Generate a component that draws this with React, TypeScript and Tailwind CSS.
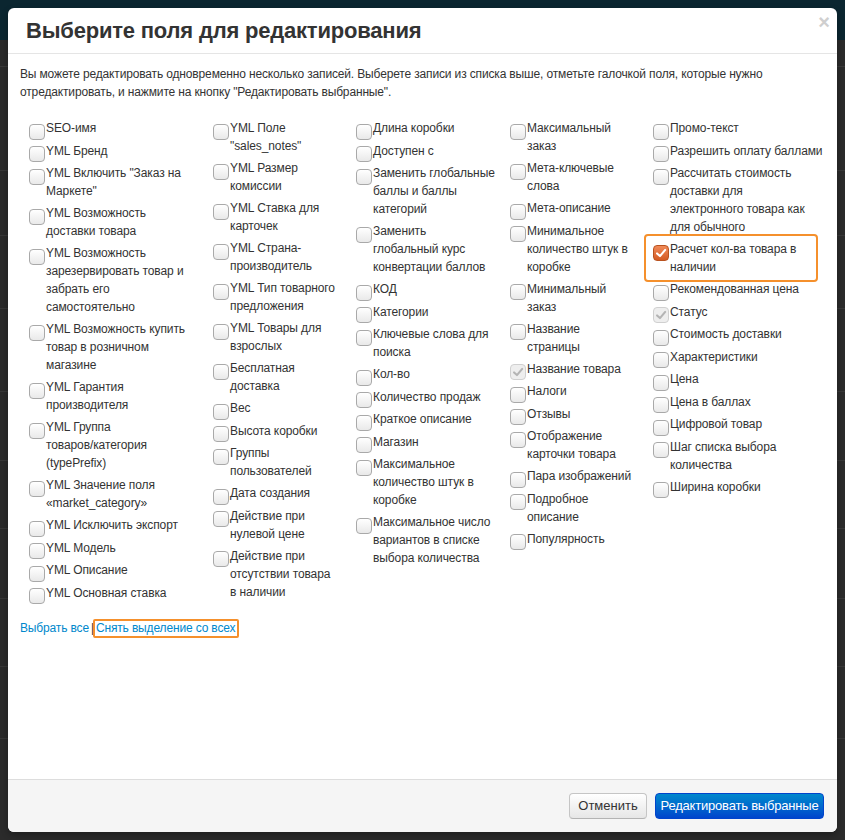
import React from "react";

type Field = {
    label: string;
    state?: "checked" | "locked";
    marked?: boolean;
};

const columns: Field[][] = [
    [
        { label: "SEO-имя" },
        { label: "YML Бренд" },
        { label: "YML Включить \"Заказ на\nМаркете\"" },
        { label: "YML Возможность\nдоставки товара" },
        { label: "YML Возможность\nзарезервировать товар и\nзабрать его\nсамостоятельно" },
        { label: "YML Возможность купить\nтовар в розничном\nмагазине" },
        { label: "YML Гарантия\nпроизводителя" },
        { label: "YML Группа\nтоваров/категория\n(typePrefix)" },
        { label: "YML Значение поля\n«market_category»" },
        { label: "YML Исключить экспорт" },
        { label: "YML Модель" },
        { label: "YML Описание" },
        { label: "YML Основная ставка" },
    ],
    [
        { label: "YML Поле\n\"sales_notes\"" },
        { label: "YML Размер\nкомиссии" },
        { label: "YML Ставка для\nкарточек" },
        { label: "YML Страна-\nпроизводитель" },
        { label: "YML Тип товарного\nпредложения" },
        { label: "YML Товары для\nвзрослых" },
        { label: "Бесплатная\nдоставка" },
        { label: "Вес" },
        { label: "Высота коробки" },
        { label: "Группы\nпользователей" },
        { label: "Дата создания" },
        { label: "Действие при\nнулевой цене" },
        { label: "Действие при\nотсутствии товара\nв наличии" },
    ],
    [
        { label: "Длина коробки" },
        { label: "Доступен с" },
        { label: "Заменить глобальные\nбаллы и баллы\nкатегорий" },
        { label: "Заменить\nглобальный курс\nконвертации баллов" },
        { label: "КОД" },
        { label: "Категории" },
        { label: "Ключевые слова для\nпоиска" },
        { label: "Кол-во" },
        { label: "Количество продаж" },
        { label: "Краткое описание" },
        { label: "Магазин" },
        { label: "Максимальное\nколичество штук в\nкоробке" },
        { label: "Максимальное число\nвариантов в списке\nвыбора количества" },
    ],
    [
        { label: "Максимальный\nзаказ" },
        { label: "Мета-ключевые\nслова" },
        { label: "Мета-описание" },
        { label: "Минимальное\nколичество штук в\nкоробке" },
        { label: "Минимальный\nзаказ" },
        { label: "Название\nстраницы" },
        { label: "Название товара", state: "locked" },
        { label: "Налоги" },
        { label: "Отзывы" },
        { label: "Отображение\nкарточки товара" },
        { label: "Пара изображений" },
        { label: "Подробное\nописание" },
        { label: "Популярность" },
    ],
    [
        { label: "Промо-текст" },
        { label: "Разрешить оплату баллами" },
        { label: "Рассчитать стоимость\nдоставки для\nэлектронного товара как\nдля обычного" },
        { label: "Расчет кол-ва товара в\nналичии", state: "checked", marked: true },
        { label: "Рекомендованная цена" },
        { label: "Статус", state: "locked" },
        { label: "Стоимость доставки" },
        { label: "Характеристики" },
        { label: "Цена" },
        { label: "Цена в баллах" },
        { label: "Цифровой товар" },
        { label: "Шаг списка выбора\nколичества" },
        { label: "Ширина коробки" },
    ],
];

function Tick({ color }: { color: string }) {
    return (
        <svg viewBox="0 0 16 16" className="w-full h-full">
            <path d="M3.5 8.5 L6.8 11.5 L12.8 4.5" fill="none" stroke={color} strokeWidth="2.4" strokeLinecap="round" strokeLinejoin="round" />
        </svg>
    );
}

// box sits a little below the first text line, like the original theme's checkboxes
const boxBase = "mt-[4.5px] -mb-[2px] w-4 h-4 shrink-0 rounded-[4px] border";

function Checkbox({ state }: { state?: Field["state"] }) {
    if (state === "checked") {
        return (
            <span className={`${boxBase} border-[#b9521f] bg-linear-to-b from-[#f08a58] to-[#d45a22]`}>
                <Tick color="#ffffff" />
            </span>
        );
    }
    if (state === "locked") {
        return (
            <span className={`${boxBase} border-[#d0d0d0] bg-[#eeeeee]`}>
                <Tick color="#b4b4b4" />
            </span>
        );
    }
    return <span className={`${boxBase} border-[#a9a9a9] bg-linear-to-b from-white to-[#e9e9e9]`} />;
}

function FieldRow({ field }: { field: Field }) {
    return (
        <label className="relative flex gap-[1px] mb-[4px] cursor-pointer">
            <Checkbox state={field.state} />
            <span className="whitespace-pre-line leading-[18px] tracking-[-0.1px]">{field.label}</span>
            {field.marked && (
                <span className="absolute -top-[6px] -bottom-[6px] -left-[9px] right-[7px] border-2 border-[#f5902c] rounded-[4px] pointer-events-none" />
            )}
        </label>
    );
}

export default function App() {
    return (
        <div className="relative w-[845px] h-[840px] overflow-hidden bg-[#2b2b2b] font-['Liberation_Sans',Arial,sans-serif]">
            {/* page behind the overlay */}
            <div className="h-[40px] bg-[#0b2630]" />
            <div className="h-[27px] border-b border-[#3a3a3a]" />
            <div className="h-[50px]" />
            {[54, 65, 73, 83, 69, 68, 70, 68, 72].map((h, i) => (
                <div key={i} style={{ height: h }} className="border-b border-[#383838]" />
            ))}

            {/* modal */}
            <div className="absolute left-[8px] top-[8px] w-[829px] h-[824px] rounded-[6px] bg-white flex flex-col overflow-hidden text-[#333] shadow-[0_3px_7px_rgba(0,0,0,0.3)]">
                <div className="relative h-[46px] shrink-0 border-b border-[#e5e5e5] px-[18px] flex items-center">
                    <h3 className="text-[22px] font-bold leading-none tracking-[-0.2px]">Выберите поля для редактирования</h3>
                    <span className="absolute right-[7px] top-[-1px] text-[20px] font-bold text-[#cfcfcf]">×</span>
                </div>

                <div className="flex-1 px-[12px] pt-[11px] text-[12px]">
                    <p className="leading-[18px] mb-[18px] tracking-[-0.15px]">
                        Вы можете редактировать одновременно несколько записей. Выберете записи из списка выше, отметьте галочкой поля, которые нужно отредактировать, и нажмите на кнопку "Редактировать выбранные".
                    </p>

                    <div className="ml-[9px] grid grid-cols-[184px_143px_154px_143px_1fr]">
                        {columns.map((col, i) => (
                            <div key={i} className="flex flex-col">
                                {col.map((f) => (
                                    <FieldRow key={f.label} field={f} />
                                ))}
                            </div>
                        ))}
                    </div>

                    <div className="mt-[13px] leading-[18px] tracking-[-0.15px]">
                        <a className="text-[#0088cc] cursor-pointer">Выбрать все</a>
                        <span className="mx-[2px]">|</span>
                        <span className="relative">
                            <a className="text-[#0088cc] cursor-pointer">Снять выделение со всех</a>
                            <span className="absolute -top-[2px] -bottom-[3px] -left-[3px] -right-[4px] border-2 border-[#f5902c] rounded-[2px]" />
                        </span>
                    </div>
                </div>

                <div className="h-[53px] shrink-0 bg-[#f5f5f5] border-t border-[#dddddd] flex justify-end items-center gap-[8px] pr-[13px] text-[13px]">
                    <button className="h-[26px] w-[78px] rounded-[4px] border border-[#c5c5c5] border-b-[#b3b3b3] bg-linear-to-b from-white to-[#e6e6e6] text-[#333]">
                        Отменить
                    </button>
                    <button className="h-[26px] w-[169px] rounded-[4px] border border-[#0044cc] bg-linear-to-b from-[#0088cc] to-[#0044cc] text-white tracking-[-0.2px]">
                        Редактировать выбранные
                    </button>
                </div>
            </div>
        </div>
    );
}
